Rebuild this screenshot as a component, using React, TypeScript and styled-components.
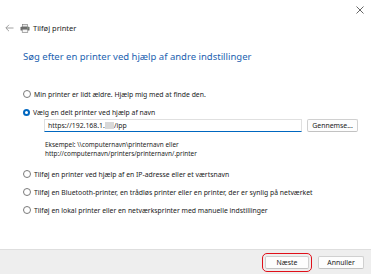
import React from "react";
import styled, { createGlobalStyle } from "styled-components";

const GlobalStyle = createGlobalStyle`
  html, body { margin: 0; padding: 0; background: #ffffff; }
  body { font-family: "Noto Sans", "Open Sans", sans-serif; color: #1b1b1b; }
`;

const Window = styled.div({
  width: "371px",
  height: "274px",
  display: "flex",
  flexDirection: "column",
  background: "#ffffff",
  overflow: "hidden",
});

const TitleBar = styled.div({
  height: "18px",
  display: "flex",
  justifyContent: "flex-end",
  alignItems: "center",
  paddingRight: "6px",
});

const CloseButton = styled.button({
  border: "none",
  background: "transparent",
  padding: 0,
  width: "10px",
  height: "10px",
  marginTop: "1px",
  display: "flex",
  alignItems: "center",
  justifyContent: "center",
  color: "#5c5c5c",
});

const NavRow = styled.div({
  display: "flex",
  alignItems: "center",
  gap: "6px",
  paddingLeft: "5px",
  height: "20px",
});

const NavTitle = styled.span({
  fontSize: "7.5px",
  color: "#1b1b1b",
  display: "flex",
  alignItems: "center",
  gap: "3px",
});

const Content = styled.div({
  flex: 1,
  display: "flex",
  flexDirection: "column",
  padding: "12px 12px 0 23px",
});

const Heading = styled.h1({
  margin: 0,
  fontSize: "9.5px",
  fontWeight: 400,
  color: "#1c5fb0",
  lineHeight: "13px",
});

const Options = styled.div({
  display: "flex",
  flexDirection: "column",
  marginTop: "26px",
});

const OptionRow = styled.label<{ $gap?: number }>(props => ({
  display: "flex",
  alignItems: "center",
  gap: "3px",
  height: "10px",
  marginBottom: `${props.$gap ?? 8}px`,
  fontSize: "6.85px",
  color: "#1b1b1b",
  whiteSpace: "nowrap",
}));

const Radio = styled.span<{ $checked?: boolean }>(props => ({
  width: props.$checked ? "7px" : "6px",
  height: props.$checked ? "7px" : "6px",
  borderRadius: "50%",
  boxSizing: "content-box",
  border: props.$checked ? "none" : "1px solid #7a7a7a",
  background: props.$checked ? "#0067c0" : "#ffffff",
  display: "flex",
  alignItems: "center",
  justifyContent: "center",
  flexShrink: 0,
  "&::after": {
    content: '""',
    display: props.$checked ? "block" : "none",
    width: "3px",
    height: "3px",
    borderRadius: "50%",
    background: "#ffffff",
  },
}));

const NameBlock = styled.div({
  display: "flex",
  flexDirection: "column",
  paddingLeft: "21px",
  marginTop: "-1px",
  marginBottom: "11px",
});

const InputRow = styled.div({
  display: "flex",
  alignItems: "center",
  gap: "5px",
});

const UrlField = styled.div({
  width: "258px",
  height: "13px",
  boxSizing: "border-box",
  border: "1px solid #e0e0e0",
  borderBottom: "1px solid #0067c0",
  display: "flex",
  alignItems: "center",
  paddingLeft: "3px",
  fontSize: "6.9px",
  color: "#1b1b1b",
});

const Masked = styled.span({
  display: "inline-block",
  width: "9px",
  height: "7px",
  background: "#d8d8d8",
  filter: "blur(0.6px)",
});

const Button = styled.button<{ $width: number }>(props => ({
  width: `${props.$width}px`,
  height: "13px",
  boxSizing: "border-box",
  border: "1px solid #d0d0d0",
  borderBottomColor: "#c2c2c2",
  borderRadius: "2px",
  background: "#fdfdfd",
  fontFamily: "inherit",
  fontSize: "6.9px",
  color: "#1b1b1b",
  padding: 0,
  display: "flex",
  alignItems: "center",
  justifyContent: "center",
}));

const Example = styled.div({
  marginTop: "8px",
  paddingLeft: "1px",
  fontSize: "6.4px",
  lineHeight: "9px",
  color: "#1b1b1b",
});

const Footer = styled.div({
  height: "24px",
  background: "#eeeeee",
  borderTop: "1px solid #dedede",
  display: "flex",
  alignItems: "center",
  justifyContent: "flex-end",
  gap: "6px",
  paddingRight: "7px",
});

const Highlight = styled.div({
  padding: "2px",
  border: "1.3px solid #e0101a",
  borderRadius: "5px",
  display: "flex",
});

const BackArrow = () => (
  <svg width="9" height="8" viewBox="0 0 9 8" fill="none" stroke="#8a8a8a" strokeWidth="0.8">
    <path d="M8.5 4H1M4 0.8L0.8 4L4 7.2" />
  </svg>
);

const PrinterIcon = () => (
  <svg width="10" height="9" viewBox="0 0 10 9">
    <rect x="2.5" y="0.5" width="5" height="2.5" fill="#e8e8e8" stroke="#777" strokeWidth="0.6" />
    <rect x="0.5" y="2.8" width="9" height="3.8" rx="0.6" fill="#6c6c6c" />
    <rect x="2.2" y="5.2" width="5.6" height="3.3" fill="#f4f4f4" stroke="#777" strokeWidth="0.6" />
    <rect x="7.3" y="3.6" width="1" height="0.8" fill="#b8e0b0" />
  </svg>
);

const CloseIcon = () => (
  <svg width="8" height="8" viewBox="0 0 8 8" stroke="#555" strokeWidth="0.9">
    <path d="M0.5 0.5L7.5 7.5M7.5 0.5L0.5 7.5" />
  </svg>
);

export default function App() {
  return (
    <>
      <GlobalStyle />
      <Window>
        <TitleBar>
          <CloseButton aria-label="Luk">
            <CloseIcon />
          </CloseButton>
        </TitleBar>
        <NavRow>
          <BackArrow />
          <NavTitle>
            <PrinterIcon />
            Tilføj printer
          </NavTitle>
        </NavRow>
        <Content>
          <Heading>Søg efter en printer ved hjælp af andre indstillinger</Heading>
          <Options>
            <OptionRow>
              <Radio />
              Min printer er lidt ældre. Hjælp mig med at finde den.
            </OptionRow>
            <OptionRow $gap={3}>
              <Radio $checked />
              Vælg en delt printer ved hjælp af navn
            </OptionRow>
            <NameBlock>
              <InputRow>
                <UrlField>
                  https://192.168.1.<Masked />/ipp
                </UrlField>
                <Button $width={51}>Gennemse...</Button>
              </InputRow>
              <Example>
                Eksempel: \\computernavn\printernavn eller
                <br />
                http://computernavn/printers/printernavn/.printer
              </Example>
            </NameBlock>
            <OptionRow>
              <Radio />
              Tilføj en printer ved hjælp af en IP-adresse eller et værtsnavn
            </OptionRow>
            <OptionRow>
              <Radio />
              Tilføj en Bluetooth-printer, en trådløs printer eller en printer, der er synlig på netværket
            </OptionRow>
            <OptionRow>
              <Radio />
              Tilføj en lokal printer eller en netværksprinter med manuelle indstillinger
            </OptionRow>
          </Options>
        </Content>
        <Footer>
          <Highlight>
            <Button $width={44}>Næste</Button>
          </Highlight>
          <Button $width={46}>Annuller</Button>
        </Footer>
      </Window>
    </>
  );
}
